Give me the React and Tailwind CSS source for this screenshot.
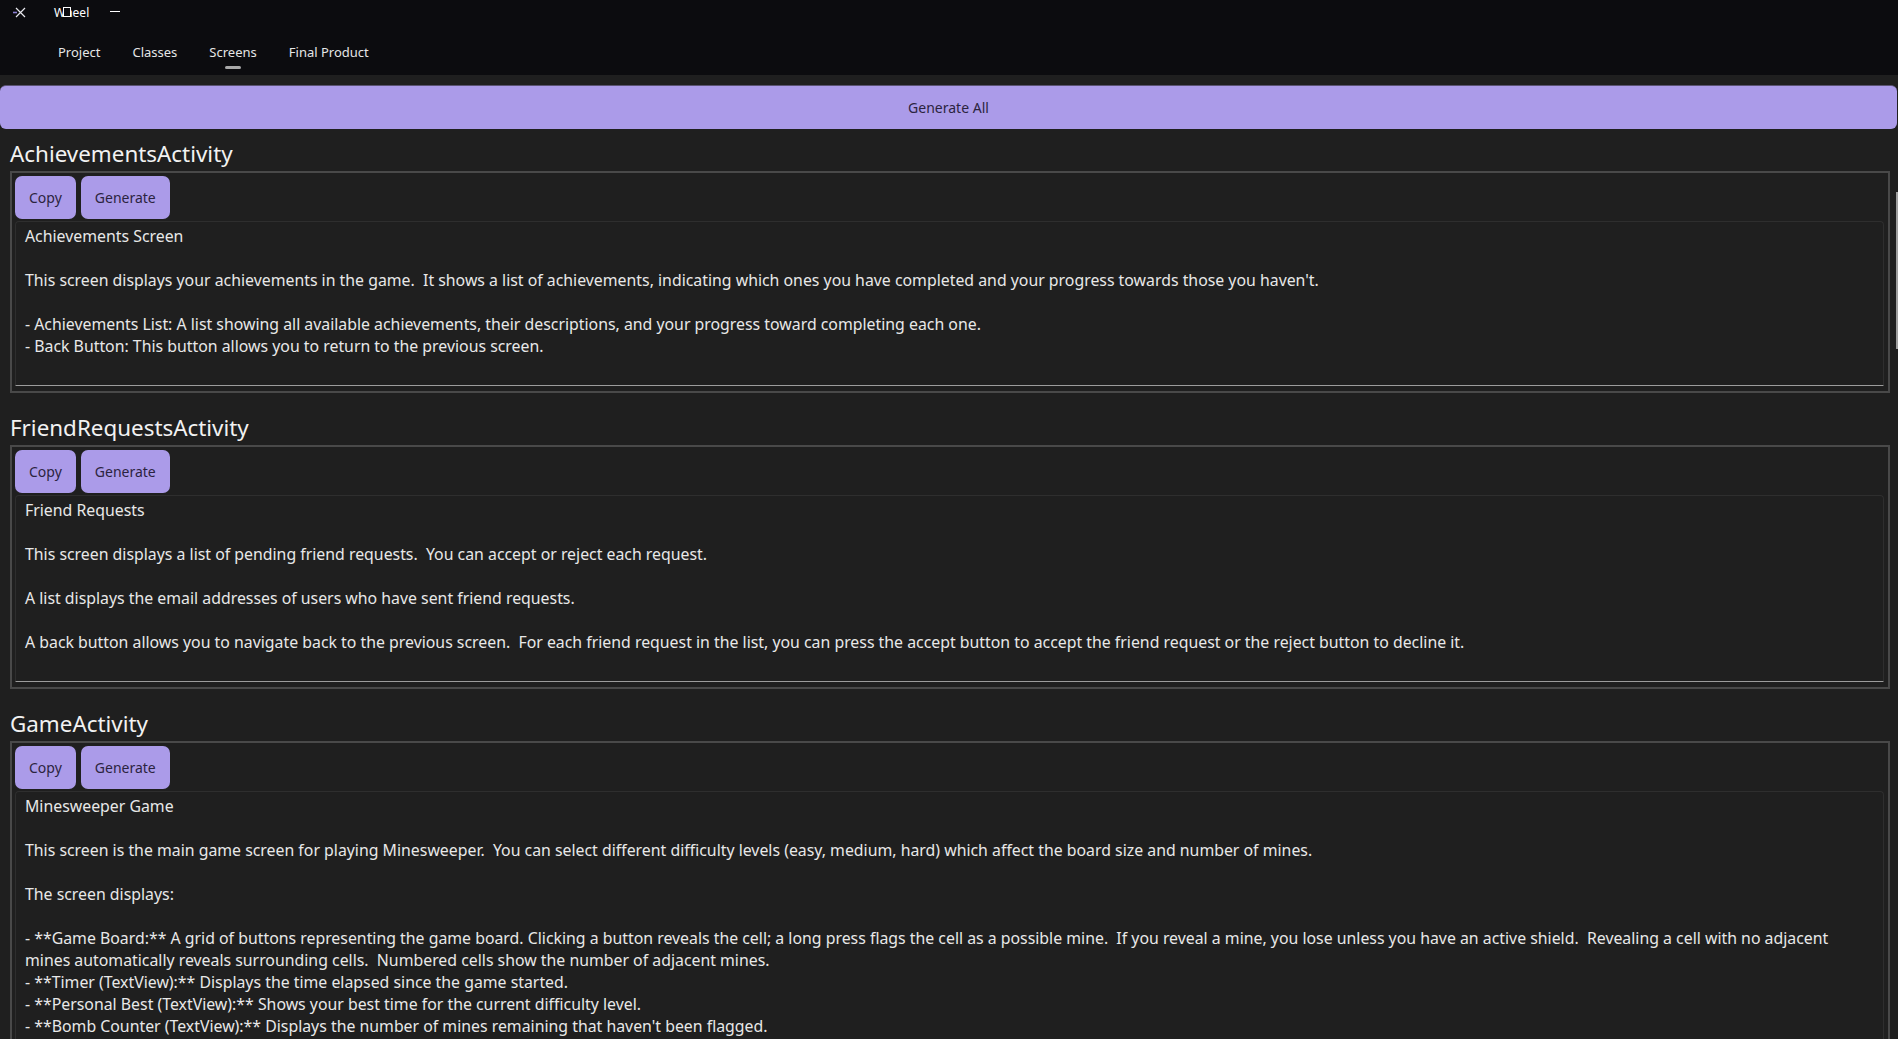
import React from "react";

const tabs = ["Project", "Classes", "Screens", "Final Product"];

const screens = [
  {
    name: "AchievementsActivity",
    text: "Achievements Screen\n\nThis screen displays your achievements in the game.  It shows a list of achievements, indicating which ones you have completed and your progress towards those you haven't.\n\n- Achievements List: A list showing all available achievements, their descriptions, and your progress toward completing each one.\n- Back Button: This button allows you to return to the previous screen.",
  },
  {
    name: "FriendRequestsActivity",
    text: "Friend Requests\n\nThis screen displays a list of pending friend requests.  You can accept or reject each request.\n\nA list displays the email addresses of users who have sent friend requests.\n\nA back button allows you to navigate back to the previous screen.  For each friend request in the list, you can press the accept button to accept the friend request or the reject button to decline it.",
  },
  {
    name: "GameActivity",
    text: "Minesweeper Game\n\nThis screen is the main game screen for playing Minesweeper.  You can select different difficulty levels (easy, medium, hard) which affect the board size and number of mines.\n\nThe screen displays:\n\n- **Game Board:** A grid of buttons representing the game board. Clicking a button reveals the cell; a long press flags the cell as a possible mine.  If you reveal a mine, you lose unless you have an active shield.  Revealing a cell with no adjacent mines automatically reveals surrounding cells.  Numbered cells show the number of adjacent mines.\n- **Timer (TextView):** Displays the time elapsed since the game started.\n- **Personal Best (TextView):** Shows your best time for the current difficulty level.\n- **Bomb Counter (TextView):** Displays the number of mines remaining that haven't been flagged.\n- **Shields (TextView):** Shows the number of shields you currently have.\n- **Back Button:** Returns to the previous screen.",
  },
];

const PurpleButton = ({ children }) => (
  <button className="h-[43px] px-[14px] rounded-[7px] bg-[#ab9be9] text-[14px] text-[#2b2440]">
    {children}
  </button>
);

export default function App() {
  return (
    <div className="relative h-screen overflow-hidden bg-[#1f1f1f] font-['Noto_Sans',sans-serif]">
      <div className="h-[75px] bg-[#0c0c0f]">
        <div className="h-[26px] flex items-center">
          <svg width="16" height="11" viewBox="0 0 16 11" className="ml-[12px] -mt-[2px]">
            <path d="M5 5.5 L1 5.5" stroke="#8b7fd0" strokeWidth="1.6" />
            <path d="M4 1 L13 10 M13 1 L4 10" stroke="#e8e8ee" strokeWidth="1.2" fill="none" />
          </svg>
          <span className="ml-[26px] text-[12px] text-white leading-none flex items-center">
            W
            <span className="relative inline-block">
              h
              <span className="absolute left-[-2px] top-[0px] w-[8px] h-[10px] border border-white bg-[#0c0c0f]" />
            </span>
            eel
          </span>
          <span className="ml-[21px] -mt-[4px] w-[10px] h-[1px] bg-white" />
        </div>
        <div className="flex pl-[42px]">
          {tabs.map((t) => (
            <div key={t} className="px-4 pt-[17px] flex flex-col items-center">
              <span className="text-[13px] leading-[18px] text-[#e6e6e6]">{t}</span>
              {t === "Screens" ? (
                <span className="mt-[5px] w-[16px] h-[3px] rounded-full bg-[#a9a9a9]" />
              ) : (
                <span className="mt-[5px] h-[3px]" />
              )}
            </div>
          ))}
        </div>
      </div>

      <div className="pt-[10px]">
        <div className="h-[44px] mr-[1px] rounded-[6px] bg-[#ab9be9] border-t border-[#5a5372] flex items-center justify-center text-[14px] text-[#2b2440]">
          Generate All
        </div>
      </div>

      <div className="pl-[10px] pr-[8px] pt-[10px] flex flex-col">
        {screens.map((s, i) => (
          <div key={s.name} className={i === 0 ? "" : "mt-[20px]"}>
            <h2 className="text-[22.4px] leading-[30px] text-[#f2f2f2]">{s.name}</h2>
            <div className="mt-[2px] border-2 border-[#494949] pt-[3px] pb-[5px] pl-[3px] pr-[4px] flex flex-col gap-[2px]">
              <div className="flex gap-[5px]">
                <PurpleButton>Copy</PurpleButton>
                <PurpleButton>Generate</PurpleButton>
              </div>
              <div className="rounded-t-[4px] border border-[#2e2e2e] border-b-[#9c9c9c] pt-[3px] pl-[9px] pr-[9px] pb-[28px]">
                <p className="whitespace-pre-wrap text-[15.85px] leading-[22px] text-[#e8e8e8]">{s.text}</p>
              </div>
            </div>
          </div>
        ))}
      </div>

      <div className="absolute right-0 top-[192px] w-[2px] h-[157px] bg-[#9e9e9e]" />
    </div>
  );
}
